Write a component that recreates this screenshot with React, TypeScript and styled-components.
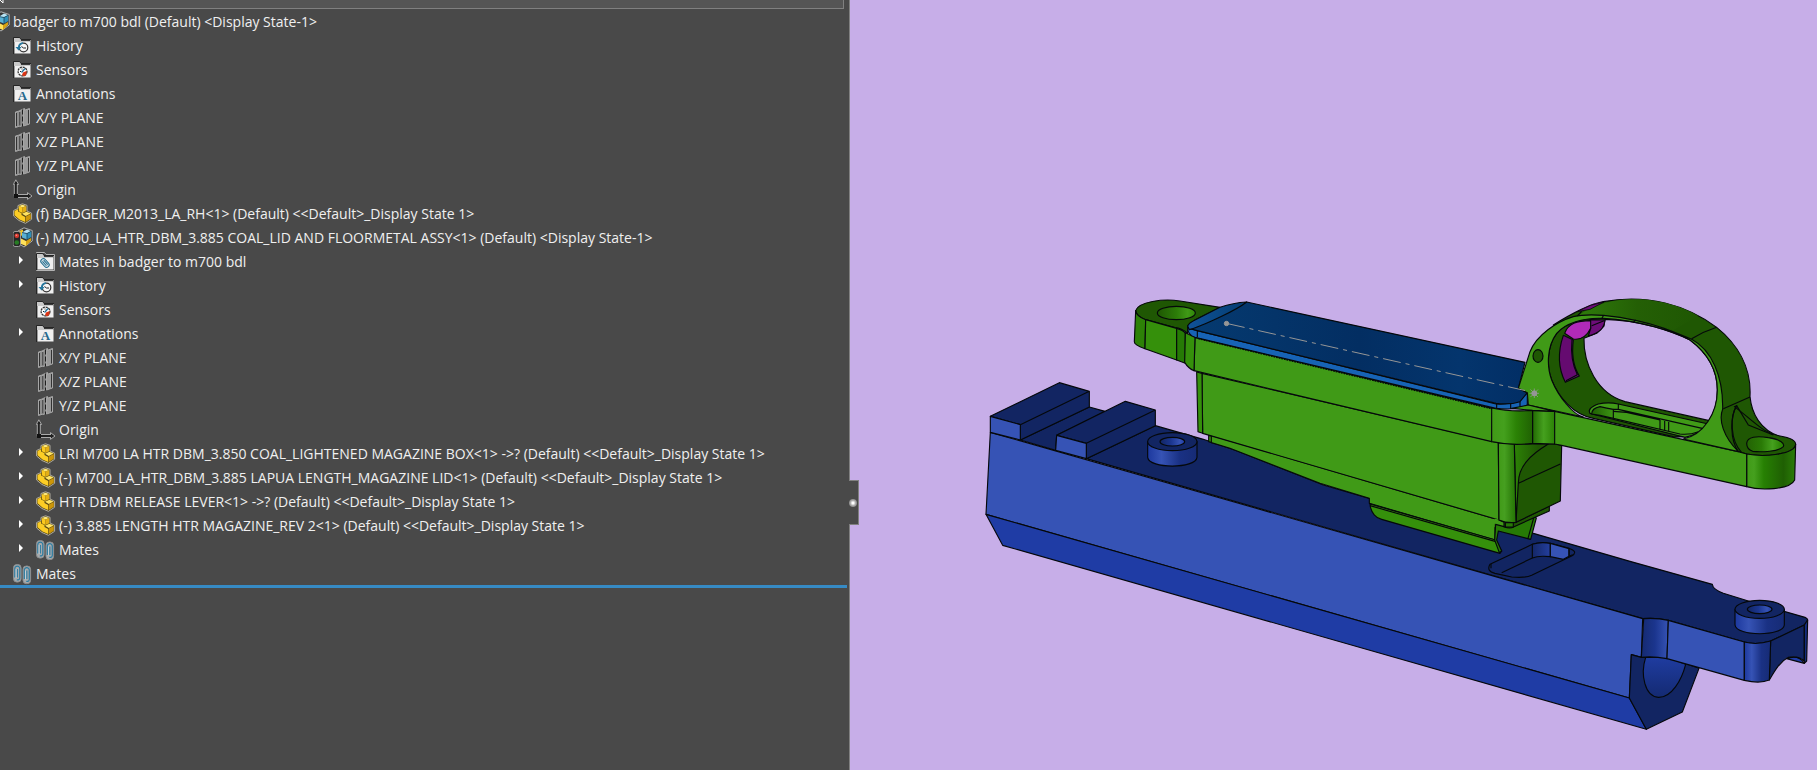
import React from "react";
import styled, { createGlobalStyle } from "styled-components";

const GlobalStyle = createGlobalStyle`
  *, *::before, *::after { box-sizing: border-box; }
  body {
    margin: 0;
    background: #494949;
    font-family: "Open Sans", "Noto Sans", sans-serif;
    color: #f0f0f0;
  }
`;

const Workspace = styled.main`
  display: flex;
  min-height: 100vh;
`;

const TreePane = styled.aside`
  position: relative;
  display: flex;
  flex-direction: column;
  flex: 0 1 850px;
  min-width: 0;
  background: #494949;
  border-right: 1px solid #808080;
`;

const FilterBar = styled.div`
  height: 9px;
  margin-right: 5px;
  background: #555555;
  border: solid #808080;
  border-width: 0 1px 1px 0;
  overflow: hidden;
`;

const FilterMark = styled.svg`
  display: block;
  width: 8px;
  height: 4px;
`;

const Tree = styled.ul`
  list-style: none;
  margin: 0 0 -1px;
  padding: 1px 0 0;
`;

const Row = styled.li<{ $level: number }>`
  display: flex;
  align-items: center;
  height: 24px;
  padding-left: ${({ $level }) => ($level === 0 ? 0 : $level * 23 - 10)}px;
  white-space: nowrap;
  overflow: hidden;
`;

const Expander = styled.button`
  display: flex;
  align-items: center;
  width: 8px;
  height: 16px;
  margin: 0 9px 4px -17px;
  padding: 0;
  border: 0;
  background: none;
  cursor: pointer;
`;

const IconBox = styled.span<{ $clipped?: boolean }>`
  display: flex;
  flex: none;
  justify-content: flex-end;
  width: ${({ $clipped }) => ($clipped ? 10 : 20)}px;
  height: 22px;
  margin-right: 3px;
  overflow: hidden;
`;

const Glyph = styled.svg`
  display: block;
  flex: none;
  width: 20px;
  height: 22px;
`;

const Label = styled.span`
  font-size: 14px;
  line-height: 24px;
`;

const RollbackBar = styled.div`
  height: 3px;
  margin-right: 2px;
  background: #368ac4;
`;

const PaneHandle = styled.button`
  position: absolute;
  top: 480px;
  right: -10px;
  display: flex;
  align-items: center;
  width: 10px;
  height: 45px;
  padding: 0;
  border: solid #808080;
  border-width: 1px 1px 1px 0;
  background: #494949;
  cursor: ew-resize;
`;

const HandleDot = styled.span`
  width: 8px;
  height: 8px;
  border-radius: 50%;
  background: radial-gradient(#ffffff 15%, #b0b0b0 45%, #808080 75%);
`;

const Viewport = styled.section`
  display: flex;
  flex: 1 1 0;
  min-width: 0;
  background: #c7aee8;
`;

const Scene = styled.svg`
  display: block;
  width: 100%;
  height: 100vh;
`;

type IconName =
  | "assembly" | "history" | "sensors" | "notes" | "plane" | "origin"
  | "part" | "subassembly" | "matesFolder" | "mates";

const Folder = ({ outlined }: { outlined?: boolean }) => (
  <>
    {outlined && <path d="M0.5 1.5 H8.5 L10 3.5 H18.5 V19.5 H0.5Z" fill="#494949" stroke="#b4b4b4" />}
    <path d="M0.5 19 V2.5 H6.5 L8 4.5 H18" fill="none" stroke="#252525" />
    <path d="M1 3 H6.5 L8 5 H17.5 V7 H1Z" fill="#c9c9c9" />
    <path d="M1.5 7 H17.5 V18.5 H1.5Z" fill="#f0f0f0" />
    <path d="M8 5.5 H17" stroke="#3a3a3a" />
  </>
);

const Clip = ({ x, y }: { x: number; y: number }) => (
  <g transform={`translate(${x} ${y})`} fill="none">
    <rect x="0.5" y="0.5" width="7.6" height="17.6" rx="3.4" fill="#a7aaac" stroke="#8c8f91" />
    <path d="M1.8 13.5 V4.6 a2.4 2.4 0 0 1 5 0 V14 a2.2 2.2 0 0 1 -3 1.8" stroke="#2b7ba0" strokeWidth="1.2" />
    <path d="M4.3 5 V13.5" stroke="#2b7ba0" strokeWidth="1.2" />
    <path d="M3.1 14 V5" stroke="#d0dde3" strokeWidth=".8" />
  </g>
);

const Cube = () => (
  <>
    <path d="M5 4 L11 0.8 L19.2 3.5 V14 L11 20 L5 16Z" fill="#343434" stroke="#b0b0b0" />
    <path d="M6 4 L10 2.5 V9 L6 8Z" fill="#e8c32e" />
    <path d="M9 5.5 L14 2.5 L18.3 4.2 L14 6.5Z" fill="#b8e5f5" />
    <path d="M9 5.5 L14 6.5 V12.5 L9 10.5Z" fill="#59b1d4" />
    <path d="M14 6.5 L18.3 4.2 V10 L14 12.5Z" fill="#2f8fb8" />
    <path d="M7 11 L13 14 V19 L7 16.5Z" fill="#ffe15a" />
    <path d="M13 14 L18 11 V14 L13 19Z" fill="#d6a211" />
    <path d="M9 5.5 L14 6.5 L18.3 4.2 M14 6.5 V12.5" fill="none" stroke="#16455e" strokeWidth=".8" />
  </>
);

function TreeIcon({ name }: { name: IconName }) {
  return (
    <Glyph viewBox="0 0 20 22" aria-hidden="true">
      {name === "assembly" && <Cube />}
      {name === "history" && (
        <>
          <Folder />
          <circle cx="10.5" cy="12.5" r="4.3" fill="#f7f7f7" stroke="#333" strokeWidth="1.2" />
          <path d="M8.5 11.5 L10.5 13 H13" fill="none" stroke="#222" />
          <path d="M10 8.2 A4.5 4.5 0 0 0 5.8 12.5" fill="none" stroke="#26789f" strokeWidth="1.8" />
          <path d="M2.5 12 H8.6 L5.6 15.6Z" fill="#26789f" />
        </>
      )}
      {name === "sensors" && (
        <>
          <Folder />
          <circle cx="9.5" cy="12.5" r="4.4" fill="#fff" stroke="#333" strokeWidth="1.3" strokeDasharray="2.2 .7" />
          <path d="M10 13.5 L13.5 12 V15.5 L11 17.5 L9 16Z" fill="#d93516" />
          <path d="M8.5 13.5 L12 9.5" stroke="#246f96" strokeWidth="1.4" />
          <path d="M7 12.5 H8 M9 9.5 V10.5" stroke="#222" />
        </>
      )}
      {name === "notes" && (
        <>
          <Folder />
          <text x="9.5" y="17" textAnchor="middle" fontFamily="Liberation Serif, serif" fontWeight="700" fontSize="13" fill="#24688c">A</text>
        </>
      )}
      {name === "plane" && (
        <>
          <path d="M2.5 5 L7 3.8 V19 L2.5 20.5Z" fill="#8f8f8f" stroke="#a6a6a6" />
          <path d="M7 3.5 L11.5 1.5 V18 L7 19.5Z" fill="#8a8a8a" stroke="#a6a6a6" />
          <path d="M10.5 3.5 L16.5 1.5 V17 L10.5 19Z" fill="#999" stroke="#a6a6a6" />
          <path d="M3.5 6 V19 M6.8 5 V18.5 M15.5 3 V16.5" fill="none" stroke="#333" />
          <path d="M9.5 2.5 V19.5" stroke="#1f1f1f" strokeDasharray="5 2" />
        </>
      )}
      {name === "origin" && (
        <>
          <path d="M2.8 3 V17 H17" fill="none" stroke="#a9a9a9" strokeWidth="4" strokeLinejoin="round" />
          <path d="M0.5 5.5 L2.8 0.8 L5.6 5.5Z M14.5 13.6 L19 17 L14.5 20.4Z" fill="#222" stroke="#a9a9a9" />
          <path d="M2.8 3 V17 H17" fill="none" stroke="#202020" strokeWidth="2" />
          <rect x="1" y="15" width="4" height="4" fill="#111" />
        </>
      )}
      {name === "part" && (
        <>
          <path d="M0.6 7.5 L5 5.5 V2.5 L9.5 0.8 L14 2.3 V8 L18.6 10.2 V16.3 L12.5 20.3 L6 17.5 L0.6 13Z" fill="#554714" stroke="#b0aca0" />
          <path d="M5.8 3 L9.5 1.8 L13.2 3 L9.5 4.6Z" fill="#ffe97c" />
          <path d="M1.5 8 L5 6.3 V8.5 L8.5 10 L8.5 12 L12.2 14 V19 L6.5 16.5 L1.5 12.3Z" fill="#fccd25" />
          <path d="M5.8 3 L9.5 4.6 V10 L5.8 8.3Z" fill="#fbc91f" />
          <path d="M9.5 4.6 L13.2 3 V8.3 L9.5 10Z" fill="#e3ae14" />
          <path d="M9 10.8 L13.4 8.8 L17.6 10.6 L12.8 13Z" fill="#ffe463" />
          <path d="M12.8 13.4 L17.8 11 V15.8 L12.8 19Z" fill="#cc960a" />
        </>
      )}
      {name === "subassembly" && (
        <>
          <Cube />
          <rect x="0" y="4.5" width="7.5" height="15" rx="2" fill="#262626" stroke="#9b9b9b" />
          <circle cx="3.8" cy="8.8" r="2.3" fill="#d8392f" />
          <circle cx="3.8" cy="15.5" r="2.3" fill="#277c24" />
          <circle cx="3.4" cy="8.3" r=".8" fill="#ff9a90" />
        </>
      )}
      {name === "matesFolder" && (
        <>
          <Folder outlined />
          <g transform="rotate(-42 9 12)" fill="none" stroke="#246f91">
            <rect x="6.4" y="7" width="5.2" height="10" rx="2.6" fill="#cfdce2" />
            <path d="M8.2 9 V15 M10 9 V15" />
          </g>
        </>
      )}
      {name === "mates" && (
        <>
          <Clip x={0} y={1} />
          <Clip x={9.5} y={2.5} />
        </>
      )}
    </Glyph>
  );
}

interface Node { icon: IconName; text: string; level: number; open?: boolean }

const nodes: Node[] = [
  { icon: "assembly", text: "badger to m700 bdl (Default) <Display State-1>", level: 0 },
  { icon: "history", text: "History", level: 1 },
  { icon: "sensors", text: "Sensors", level: 1 },
  { icon: "notes", text: "Annotations", level: 1 },
  { icon: "plane", text: "X/Y PLANE", level: 1 },
  { icon: "plane", text: "X/Z PLANE", level: 1 },
  { icon: "plane", text: "Y/Z PLANE", level: 1 },
  { icon: "origin", text: "Origin", level: 1 },
  { icon: "part", text: "(f) BADGER_M2013_LA_RH<1> (Default) <<Default>_Display State 1>", level: 1 },
  { icon: "subassembly", text: "(-) M700_LA_HTR_DBM_3.885 COAL_LID AND FLOORMETAL ASSY<1> (Default) <Display State-1>", level: 1 },
  { icon: "matesFolder", text: "Mates in badger to m700 bdl", level: 2, open: false },
  { icon: "history", text: "History", level: 2, open: false },
  { icon: "sensors", text: "Sensors", level: 2 },
  { icon: "notes", text: "Annotations", level: 2, open: false },
  { icon: "plane", text: "X/Y PLANE", level: 2 },
  { icon: "plane", text: "X/Z PLANE", level: 2 },
  { icon: "plane", text: "Y/Z PLANE", level: 2 },
  { icon: "origin", text: "Origin", level: 2 },
  { icon: "part", text: "LRI M700 LA HTR DBM_3.850 COAL_LIGHTENED MAGAZINE BOX<1> ->? (Default) <<Default>_Display State 1>", level: 2, open: false },
  { icon: "part", text: "(-) M700_LA_HTR_DBM_3.885 LAPUA LENGTH_MAGAZINE LID<1> (Default) <<Default>_Display State 1>", level: 2, open: false },
  { icon: "part", text: "HTR DBM RELEASE LEVER<1> ->? (Default) <<Default>_Display State 1>", level: 2, open: false },
  { icon: "part", text: "(-) 3.885 LENGTH HTR MAGAZINE_REV 2<1> (Default) <<Default>_Display State 1>", level: 2, open: false },
  { icon: "mates", text: "Mates", level: 2, open: false },
  { icon: "mates", text: "Mates", level: 1 },
];

const NAVY = "#122562";
const BLUE = "#3653b5";
const ROYAL = "#1f3ca5";
const GREEN = "#409a17";
const LEAF = "#35900b";
const DEEP = "#1f5703";
const BACKDROP = "#c7aee8";

const Gradient = ({ id, stops, vertical }: { id: string; stops: [number, string][]; vertical?: boolean }) => (
  <linearGradient id={id} x1="0" y1="0" x2={vertical ? 0 : 1} y2={vertical ? 1 : 0}>
    {stops.map(([at, color]) => <stop key={at} offset={at} stopColor={color} />)}
  </linearGradient>
);

/* Screw boss: a short drilled cylinder standing on the receiver. */
const Boss = ({ x, y }: { x: number; y: number }) => (
  <g transform={`translate(${x} ${y})`}>
    <path d="M-74 0 V47 C-70 82 70 82 74 47 V0Z" fill="url(#bossSide)" />
    <ellipse rx="74" ry="27" fill={NAVY} />
    <ellipse rx="37" ry="13" fill="url(#bossHole)" />
  </g>
);

/* Each group below is drafted at three times its size on screen. */
const Receiver = () => (
  <>
    <g transform="translate(970 360) scale(.33333)">
      <path fill={NAVY} d="M349 296 L556 197 L700 238 L800 272 L990 347 L1060 375 L1198 415 L1500 500 L1690 520 L1980 604 L2227 673 Q2228 688 2260 700 L2335 723 L2505 772 Q2513 776 2513 780 L2503 795 L2402 843 Q2360 856 2323 846 L2095 781 Q2060 773 2018 776Z" />
      <path fill={BLUE} d="M61 217 L2018 776 L2014 892 L1984 884 L1978 1014 L48 463Z" />
      <path fill={ROYAL} d="M48 463 L1978 1014 L2029 1108 L98 556Z" />
      <path fill={NAVY} d="M151 240 L358 141 L405 154 L260 226 L257 271Z" />
      <path fill={NAVY} d="M61 169 L268 68 L358 94 L151 194Z M151 194 L358 94 V141 L151 240Z" />
      <path fill={BLUE} d="M61 169 L151 194 V240 L61 217Z" />
      <path fill={NAVY} d="M260 226 L466 124 L556 150 L349 250Z M349 250 L556 150 V197 L349 296Z" />
      <path fill={BLUE} d="M260 226 L349 250 V296 L257 271Z" />
      <Boss x={607} y={245} />
    </g>
    <g transform="translate(1560 550) scale(.33333)">
      <path fill={NAVY} d="M214 314 L244 322 L322 322 L417 355 L367 486 L259 538 L208 444Z" />
      <path fill="url(#bore)" d="M257 322 C240 375 255 440 295 442 C335 443 365 390 377 343 L322 322Z" />
      <path fill="url(#scallop)" d="M251 206 Q290 203 325 211 L321 326 Q280 318 244 322Z" />
      <path fill={BLUE} d="M325 211 L553 276 V391 L321 326Z" />
      <path fill={ROYAL} d="M680 326 Q715 312 733 340Z" />
      <path fill={NAVY} d="M632 273 L733 225 V333 Q715 316 685 322 C660 335 645 360 628 390Z" />
      <path fill="#142d7d" d="M733 225 L743 210 L740 333 L733 340Z" />
      <path fill="url(#bossSide)" d="M553 276 Q590 286 632 273 L628 390 Q600 402 553 391Z" />
      <Boss x={599} y={178} />
    </g>
    <g transform="translate(1300 430) scale(.33333)">
      <path fill={NAVY} d="M570 403 Q558 423 585 430 L635 441 Q675 445 695 436 L815 378 Q835 365 810 356 L755 341 Q720 335 697 343Z" />
      <path fill="url(#slotEnd)" d="M697 343 Q720 335 751 340 V380 Q715 376 697 384Z" />
      <path fill={BLUE} d="M751 340 L807 356 V379 L790 388 L751 380Z" />
      <path fill="none" d="M605 428 L697 384 M807 356 V379 L818 374 M573 402 V415" />
    </g>
  </>
);

const MagazineWell = () => (
  <>
    <g transform="translate(1120 280) scale(.33333)">
      <path fill={LEAF} d="M266 466 L300 470 V495 L266 485Z" />
      <path fill={GREEN} d="M274 466 L1137 720 L1125 733 V780 L748 670 V655 L600 610 L330 505 L274 488Z" />
      <path fill={GREEN} d="M246 280 L1135 488 L1137 720 L248 460Z" />
      <path fill={LEAF} d="M230 276 L246 280 L248 460 L234 455Z" />
      <path fill={GREEN} d="M225 172 L1118 385 L1115 485 L222 272Z" />
      <path fill={DEEP} d="M47 92 C55 65 130 55 180 63 L300 82 L225 120 L203 138 V160 Q185 145 165 143 L77 119 Q47 108 47 92Z" />
      <path fill="#2d8107" d="M47 92 Q50 110 77 119 L75 206 Q42 195 43 185Z" />
      <path fill={LEAF} d="M77 119 L170 145 V240 L75 206Z" />
      <path fill="#267a05" d="M170 145 Q190 150 196 160 V250 L170 240Z" />
      <path fill={LEAF} d="M196 158 L225 172 L222 272 Q205 265 194 247Z" />
      <ellipse cx="169" cy="99" rx="57" ry="20" fill="url(#earHole)" />
    </g>
    <g transform="translate(1300 430) scale(.33333)">
      <path fill={GREEN} stroke="none" d="M583 266 L650 275 L706 254 L700 290 L640 300 L592 300 L583 290Z" />
      <path fill={LEAF} d="M210 222 C212 250 230 265 245 268 L600 370 L605 363 L587 330Z" />
      <path fill="none" d="M210 227 L585 334" />
      <path fill="#267a05" d="M587 283 L612 290 H640 L700 258 L709 264 L692 328 L595 303 L590 330 L605 363 L598 368 L584 330Z" />
      <path fill="none" d="M701 264 L684 325" />
      <path fill={DEEP} d="M597 270 L612 277 V290 Q630 298 642 290 L748 243 V228 L648 277Z" />
      <path fill={DEEP} d="M643 42 H770 L785 47 L781 213 L648 277Z" />
      <path fill="url(#magSide)" d="M643 42 H745 C690 75 655 110 655 160 L648 277Z" />
      <path fill="none" d="M655 160 L781 102" />
      <path fill="url(#magCorner)" d="M595 38 L643 42 L648 277 Q620 280 597 270Z" />
      <path fill="#267a05" d="M616 278 H640 V291 H616Z" />
    </g>
  </>
);

const TriggerGuard = () => (
  <g transform="translate(1440 280) scale(.33333)">
    <path fill={DEEP} d="M340 135 C380 110 440 75 490 65 C620 40 740 75 830 142 C890 190 935 260 930 350 C935 400 960 450 1020 470 L920 522 L880 510 L700 300Z" />
    <path fill="url(#bandShade)" stroke="none" d="M412 110 C440 85 500 60 570 58 C650 54 730 80 775 108 L700 150 L590 120Z" />
    <path fill="#6d0d79" strokeWidth="2.4" d="M412 95 Q450 72 492 66 L450 88Z" />
    <path fill={DEEP} d="M883 380 C950 430 970 460 1020 468 C1050 473 1067 480 1067 493 C1065 524 970 532 920 522 L895 515 C870 480 870 410 890 377Z" />
    <path fill="url(#tangEnd)" d="M920 522 C970 532 1065 524 1067 493 L1064 600 C1050 630 960 632 920 620Z" />
    <path fill={GREEN} d="M265 375 L344 394 L895 515 L920 522 V620 L365 496 L344 492Z" />
    <path fill="url(#tangHole)" d="M920 490 C922 470 950 467 985 473 C1020 478 1035 490 1030 500 C1015 515 965 517 938 514 Q920 508 920 490Z" />
    <path fill={DEEP} d="M495 116 C430 112 375 130 350 160 C320 200 320 260 335 300 C355 350 400 405 460 415 L700 470 C750 475 780 455 805 425 L832 330Z" />
    <path fill={BACKDROP} d="M432 175 C430 250 470 340 555 365 L808 422 C825 395 832 360 832 330 C832 260 790 210 750 180 C700 155 600 120 495 118 L492 138 L470 160Z" />
    <path fill={GREEN} d="M450 400 Q440 385 475 372 Q505 365 535 372 L805 432 Q780 462 735 472 L480 408Z" />
    <path fill="url(#slotGreen)" d="M480 380 Q500 385 520 388 V415 L480 406 L455 402 Q455 385 480 380Z" />
    <path fill="none" d="M535 372 V388 L790 446 M520 388 L535 388 M520 415 L720 462 Q750 465 775 455 M520 394 L560 397 L660 420 M660 420 V447 M674 423 V450 M686 426 V452" />
    <path fill={GREEN} fillRule="evenodd" d="M235 325 L270 215 C290 165 350 125 400 110 C450 98 530 108 590 122 C660 137 700 155 755 178 C815 210 850 290 848 388 C835 420 850 470 895 515 L730 477 C790 465 832 400 832 330 C832 260 790 210 750 180 C700 155 600 120 490 115 C430 112 375 130 350 160 C320 200 320 260 335 300 C355 350 400 405 430 411 L265 375 L262 338Z" />
    <path fill="#650b70" d="M370 166 L400 180 C395 220 400 260 418 288 L376 307 C352 260 355 210 370 166Z" />
    <path fill="none" d="M378 302 L412 284 C395 250 392 220 396 180" />
    <path fill="#6d0d79" d="M450 119 L495 120 C492 145 480 158 445 168 L452 145Z" />
    <path fill="#b02ab8" d="M374 160 C385 130 410 122 452 122 V145 C440 170 420 180 400 177Z" />
    <path fill="none" d="M455 137 L492 122 M755 176 Q790 155 830 142 M850 386 L930 351 M890 377 L925 435 L1000 465 M412 108 L425 94 M485 116 L490 107 M580 127 L587 120 M890 377 C870 410 870 480 905 518" />
    <ellipse cx="294" cy="228" rx="15" ry="19" fill={DEEP} />
    <path fill="url(#cornerA)" d="M155 384 Q210 396 278 391 V490 Q215 498 155 485Z" />
    <path fill="url(#cornerB)" d="M278 391 L344 394 V492 L278 490Z" />
    <path fill={GREEN} d="M215 385 L265 375 L344 394 L278 391Z" />
  </g>
);

const Lid = () => (
  <g transform="translate(1120 280) scale(.33333)">
    <path fill="#1763b5" d="M203 143 L232 152 L1128 372 Q1185 376 1222 338 V375 Q1190 392 1128 385 L225 172 Q203 165 203 143Z" />
    <path fill="url(#lidTop)" d="M213 147 L232 152 L1128 370 Q1170 375 1200 365 L1222 338 L1195 325 L1215 247 L380 66Z" />
    <path fill="url(#lidBevel)" d="M203 138 Q205 130 225 120 L300 82 Q340 68 380 66 C350 90 260 132 218 146 L208 149Z" />
    <path fill="none" d="M232 152 V172 M1130 370 V385 M1172 372 V387 M1200 365 V383" />
    <path d="M235 176 L1118 387" fill="none" strokeDasharray="5 3" strokeWidth="4" />
  </g>
);

const Model = () => (
  <Scene viewBox="850 0 967 770" preserveAspectRatio="xMidYMid meet" role="img" aria-label="Assembly model">
    <defs>
      <Gradient id="bossSide" stops={[[0, "#1c389e"], [0.28, "#3653b5"], [0.65, "#1a3184"], [1, "#162b75"]]} />
      <Gradient id="bossHole" stops={[[0, "#122562"], [0.45, "#1b3690"], [0.8, "#3653b5"], [1, "#1f3ca5"]]} />
      <Gradient id="bore" vertical stops={[[0, "#1f3ca0"], [1, "#142a72"]]} />
      <Gradient id="scallop" stops={[[0, "#152a70"], [0.5, "#1b358e"], [1, "#3653b5"]]} />
      <Gradient id="slotEnd" stops={[[0, "#142767"], [1, "#243f9e"]]} />
      <Gradient id="earHole" stops={[[0, "#1f5703"], [0.5, "#2c7c08"], [0.8, "#409a17"], [1, "#2f8607"]]} />
      <Gradient id="magSide" stops={[[0, "#2d8206"], [0.7, "#1f5703"], [1, "#1f5703"]]} />
      <Gradient id="magCorner" stops={[[0, "#409a17"], [0.35, "#469f20"], [1, "#247204"]]} />
      <Gradient id="bandShade" stops={[[0, "#2f7c0b"], [0.5, "#245f05"], [1, "#1f5703"]]} />
      <Gradient id="tangEnd" stops={[[0, "#409a17"], [0.15, "#45a01e"], [0.35, "#278003"], [0.75, "#1f5f03"], [1, "#2b7d08"]]} />
      <Gradient id="tangHole" stops={[[0, "#236204"], [0.4, "#2a7a06"], [0.7, "#45a01e"], [0.9, "#2e8607"], [1, "#278003"]]} />
      <Gradient id="slotGreen" stops={[[0, "#1f5f03"], [1, "#3c9514"]]} />
      <Gradient id="cornerA" stops={[[0, "#409a17"], [0.3, "#44a01d"], [0.6, "#2b8205"], [1, "#206103"]]} />
      <Gradient id="cornerB" stops={[[0, "#226a03"], [0.5, "#45a01e"], [1, "#2b8205"]]} />
      <Gradient id="lidTop" stops={[[0, "#053a70"], [0.5, "#032e62"], [0.8, "#04356d"], [1, "#022e65"]]} />
      <Gradient id="lidBevel" stops={[[0, "#11529a"], [0.5, "#094885"], [1, "#053b70"]]} />
    </defs>
    <g stroke="#05080a" strokeWidth="3.4" strokeLinejoin="round">
      <Receiver />
      <MagazineWell />
      <Lid />
      <TriggerGuard />
    </g>
    <g stroke="#969696" fill="#969696">
      <path d="M1227 323.5 L1525 390.5" strokeDasharray="18 5 4 5" />
      <circle cx="1226.5" cy="323.5" r="2.2" />
      <circle cx="1534.3" cy="393.3" r="2.5" />
      <path d="M1529.5 393.3 H1539 M1534.3 388.5 V398 M1530.5 389.5 L1538 397 M1538 389.5 L1530.5 397" strokeWidth=".8" />
    </g>
  </Scene>
);

export default function App() {
  return (
    <>
      <GlobalStyle />
      <Workspace>
        <TreePane>
          <FilterBar>
            <FilterMark viewBox="0 0 8 4" aria-hidden="true">
              <path d="M0 0 L3 3 V0" fill="none" stroke="#fff" />
            </FilterMark>
          </FilterBar>
          <Tree>
            {nodes.map((node, i) => (
              <Row key={i} $level={node.level}>
                {node.open !== undefined && (
                  <Expander type="button" aria-expanded={node.open} aria-label={`Expand ${node.text}`}>
                    <svg width="4" height="8" viewBox="0 0 4 8"><path d="M0 0 L4 4 L0 8Z" fill="#fff" /></svg>
                  </Expander>
                )}
                <IconBox $clipped={node.level === 0}><TreeIcon name={node.icon} /></IconBox>
                <Label>{node.text}</Label>
              </Row>
            ))}
          </Tree>
          <RollbackBar />
          <PaneHandle type="button" aria-label="Collapse panel"><HandleDot /></PaneHandle>
        </TreePane>
        <Viewport><Model /></Viewport>
      </Workspace>
    </>
  );
}
